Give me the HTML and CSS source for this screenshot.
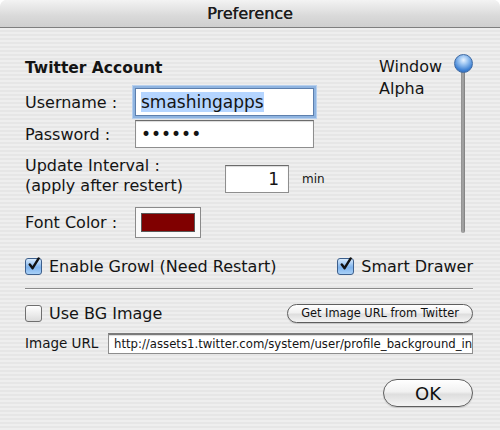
FILE: index.html
```html
<!DOCTYPE html>
<html lang="en">
<head>
<meta charset="UTF-8">
<title>Preference</title>
<link rel="stylesheet" href="styles.css">
</head>
<body>
<div class="window">
  <div class="titlebar">Preference</div>

  <div class="content">
    <div class="top">
      <div class="form">
        <div class="heading">Twitter Account</div>

        <div class="row row-user">
          <span class="label">Username :</span>
          <div class="field field-focus"><span class="selected">smashingapps</span></div>
        </div>

        <div class="row row-pass">
          <span class="label">Password :</span>
          <div class="field dots">&#8226;&#8226;&#8226;&#8226;&#8226;&#8226;</div>
        </div>

        <div class="row row-interval">
          <span class="label label-wide">Update Interval :<br>(apply after restert)</span>
          <div class="field field-num">1</div>
          <span class="unit">min</span>
        </div>

        <div class="row row-color">
          <span class="label">Font Color :</span>
          <div class="colorwell"><div class="swatch"></div></div>
        </div>
      </div>

      <div class="alpha">
        <div class="alpha-label">Window<br>Alpha</div>
        <div class="slider">
          <div class="knob"></div>
          <div class="track"></div>
        </div>
      </div>
    </div>

    <div class="checks">
      <label class="check">
        <span class="box checked">
          <svg width="15" height="15" viewBox="0 0 15 15"><path d="M3 7.5 L6 11.5 L12.5 1" fill="none" stroke="#111" stroke-width="2.6" stroke-linecap="round" stroke-linejoin="round"/></svg>
        </span>
        Enable Growl (Need Restart)
      </label>
      <label class="check">
        <span class="box checked">
          <svg width="15" height="15" viewBox="0 0 15 15"><path d="M3 7.5 L6 11.5 L12.5 1" fill="none" stroke="#111" stroke-width="2.6" stroke-linecap="round" stroke-linejoin="round"/></svg>
        </span>
        Smart Drawer
      </label>
    </div>

    <hr class="sep">

    <div class="bg-row">
      <label class="check">
        <span class="box"></span>
        Use BG Image
      </label>
      <button class="pill small">Get Image URL from Twitter</button>
    </div>

    <div class="url-row">
      <span class="url-label">Image URL</span>
      <div class="field url">http://assets1.twitter.com/system/user/profile_background_in</div>
    </div>

    <div class="footer">
      <button class="pill ok">OK</button>
    </div>
  </div>
</div>
</body>
</html>
```

FILE: styles.css
```css
body {
  margin: 0;
  background-color: #ffffff;
  font-family: "DejaVu Sans", "Liberation Sans", sans-serif;
  color: #141414;
}

.window {
  width: 500px;
  height: 430px;
  overflow: hidden;
  border-radius: 7px 7px 0 0;
  background-color: #ececec;
  background-image: repeating-linear-gradient(to bottom, #eeeeee 0px, #eeeeee 2px, #e6e6e6 2px, #e6e6e6 4px);
}

.titlebar {
  height: 27px;
  line-height: 28px;
  text-align: center;
  font-size: 16px;
  color: #1c1c1c;
  text-shadow: 0.3px 0 0 #1c1c1c;
  background: linear-gradient(to bottom, #f3f3f3, #d9d9d9 60%, #cfcfcf);
  border-bottom: 1px solid #7f7f7f;
}

.content {
  padding: 0 27px 0 25px;
}

.top {
  display: flex;
  justify-content: space-between;
}

.form {
  width: 290px;
}

.heading {
  margin-top: 30px;
  height: 20px;
  line-height: 20px;
  font-weight: bold;
  font-size: 15.5px;
}

.row {
  display: flex;
  align-items: center;
}

.label {
  width: 110px;
  flex-shrink: 0;
  font-size: 16px;
}

.row-user {
  margin-top: 10px;
  height: 28px;
}

.row-pass {
  margin-top: 4px;
  height: 28px;
}

.row-interval {
  margin-top: 8px;
  height: 40px;
}

.label-wide {
  width: 200px;
  line-height: 20px;
}

.row-color {
  margin-top: 11px;
  height: 31px;
}

.field {
  box-sizing: border-box;
  height: 28px;
  width: 179px;
  background: #ffffff;
  border: 1px solid #8e8e8e;
  border-top-color: #6b6b6b;
  box-shadow: inset 0 1px 1px rgba(0, 0, 0, 0.15);
  font-size: 17px;
  line-height: 26px;
  padding-left: 5px;
  white-space: nowrap;
  overflow: hidden;
}

.field-focus {
  border-color: #5d7fad;
  box-shadow: 0 0 0 2px #8fb4e0, 0 0 0 3px #b6cfee;
}

.selected {
  background-color: #b5d5ff;
}

.field-num {
  width: 64px;
  flex-shrink: 0;
  margin-top: 6px;
  text-align: right;
  padding-right: 9px;
}

.unit {
  margin-top: 6px;
  margin-left: 13px;
  font-size: 12px;
}

.colorwell {
  box-sizing: border-box;
  width: 66px;
  height: 31px;
  padding: 5px;
  background: #fafafa;
  border: 1px solid #8a8a8a;
}

.swatch {
  height: 100%;
  background-color: #800000;
  border: 1px solid #5a5a5a;
  box-sizing: border-box;
}

.alpha {
  display: flex;
  margin-top: 26px;
}

.alpha-label {
  width: 74px;
  margin-top: 2px;
  font-size: 16px;
  line-height: 22px;
}

.slider {
  display: flex;
  flex-direction: column;
  align-items: center;
  width: 20px;
}

.knob {
  width: 17px;
  height: 17px;
  border-radius: 50%;
  border: 1px solid #3f6aa3;
  background: radial-gradient(circle at 50% 30%, #e8f3ff 0, #9cc5f2 30%, #3d80d3 70%, #2a5ea8 100%);
  position: relative;
  z-index: 1;
}

.track {
  width: 4px;
  height: 163px;
  margin-top: -3px;
  border-radius: 0 0 2px 2px;
  background: linear-gradient(to right, #8c8c8c, #a9a9a9, #7a7a7a);
}

.checks {
  display: flex;
  justify-content: space-between;
  margin-top: 18px;
  height: 20px;
}

.check {
  display: flex;
  align-items: center;
  font-size: 16px;
}

.box {
  box-sizing: border-box;
  width: 17px;
  height: 17px;
  margin-right: 7px;
  border-radius: 3px;
  border: 1px solid #6f6f6f;
  background: linear-gradient(to bottom, #ffffff, #dcdcdc);
  display: flex;
  align-items: center;
  justify-content: center;
}

.box.checked {
  border-color: #3d5f8c;
  background: linear-gradient(to bottom, #d9ebfc, #7fb3ec 55%, #a8d0f7);
}

.box svg {
  margin-top: -3px;
  margin-left: 1px;
}

.sep {
  margin: 12px 0 0 0;
  border: none;
  border-top: 1px solid #8a8a8a;
  border-bottom: 1px solid #fafafa;
}

.bg-row {
  display: flex;
  justify-content: space-between;
  align-items: center;
  margin-top: 13px;
  height: 20px;
}

.pill {
  font-family: "DejaVu Sans", "Liberation Sans", sans-serif;
  color: #111;
  border: 1px solid #5e5e5e;
  background: linear-gradient(to bottom, #ffffff, #f1f1f1 45%, #dedede 55%, #f4f4f4);
  box-shadow: 0 1px 1px rgba(0, 0, 0, 0.15);
  padding: 0;
}

.small {
  width: 186px;
  height: 19px;
  border-radius: 10px;
  font-size: 11.4px;
}

.url-row {
  display: flex;
  align-items: center;
  margin-top: 9px;
  height: 22px;
}

.url-label {
  width: 83px;
  font-size: 13.5px;
}

.url {
  width: 365px;
  height: 21px;
  font-size: 11.7px;
  line-height: 19px;
  padding-left: 5px;
  border-top: 2px solid #7a7a7a;
}

.footer {
  display: flex;
  justify-content: flex-end;
  margin-top: 25px;
}

.ok {
  width: 90px;
  height: 28px;
  border-radius: 14px;
  font-size: 18px;
}
```
